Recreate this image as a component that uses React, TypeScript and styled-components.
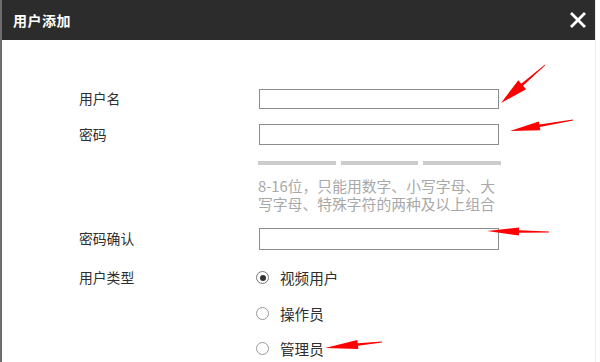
import React from "react";
import styled, { createGlobalStyle } from "styled-components";

const GlobalStyle = createGlobalStyle`
  html, body { margin: 0; padding: 0; background: #ffffff; }
  body { font-family: "Noto Sans CJK SC", "Noto Sans", sans-serif; }
  * { box-sizing: border-box; }
`;

const Dialog = styled.div`
  position: relative;
  width: 596px;
  height: 362px;
  background: #fff;
  border-left: 2px solid #6e6e6e;
  border-right: 1px solid #ececec;
  overflow: hidden;
`;

const Header = styled.div`
  height: 40px;
  background: #2c2c2c;
  display: flex;
  align-items: center;
  justify-content: space-between;
  padding: 0 9px 0 11px;
  color: #fff;
`;

const Title = styled.div`
  font-size: 14px;
  font-weight: 700;
  letter-spacing: 0.5px;
`;

const Close = styled.button`
  border: 0;
  background: transparent;
  padding: 0;
  width: 16px;
  height: 16px;
  display: flex;
  cursor: pointer;
`;

const Form = styled.div`
  padding: 49px 0 0 77px;
  display: flex;
  flex-direction: column;
`;

const Row = styled.div<{ $h: number; $mt?: number }>`
  display: grid;
  grid-template-columns: 180px 1fr;
  align-items: center;
  height: ${(p) => p.$h}px;
  margin-top: ${(p) => p.$mt ?? 0}px;
`;

const Label = styled.div`
  font-size: 13.8px;
  color: #2e2e2e;
  line-height: 1;
`;

const Input = styled.input`
  width: 240px;
  height: 100%;
  border: 1px solid #8c8c8c;
  background: #fff;
  padding: 0 4px;
  outline: none;
`;

const Bars = styled.div`
  display: grid;
  grid-template-columns: 78px 77px 78px;
  column-gap: 5px;
  margin-left: -1px;
`;

const Bar = styled.div`
  height: 4px;
  background: #cccccc;
`;

const Hint = styled.div`
  grid-column: 2;
  width: 246px;
  margin-left: -1px;
  font-size: 14.8px;
  line-height: 18px;
  color: #a8a8a8;
`;

const RadioLine = styled.label`
  display: flex;
  align-items: center;
  gap: 11px;
  font-size: 14.6px;
  color: #2e2e2e;
  margin-left: -3px;
`;

const RadioDot = styled.span<{ $on?: boolean }>`
  width: 13px;
  height: 13px;
  border-radius: 50%;
  border: 1px solid ${(p) => (p.$on ? "#777" : "#9a9a9a")};
  display: flex;
  align-items: center;
  justify-content: center;
  &::after {
    content: "";
    width: 6px;
    height: 6px;
    border-radius: 50%;
    background: ${(p) => (p.$on ? "#333" : "transparent")};
  }
`;

const Annotations = styled.svg`
  position: absolute;
  left: -2px;
  top: 0;
  pointer-events: none;
`;

type Pt = [number, number];

function arrowPoints(tail: Pt, tip: Pt, headLen: number, headW: number, shaftW: number) {
  const dx = tip[0] - tail[0];
  const dy = tip[1] - tail[1];
  const len = Math.hypot(dx, dy);
  const ux = dx / len;
  const uy = dy / len;
  const nx = -uy;
  const ny = ux;
  const bx = tip[0] - ux * headLen;
  const by = tip[1] - uy * headLen;
  const pts: Pt[] = [
    [tail[0] + nx * shaftW * 0.3, tail[1] + ny * shaftW * 0.3],
    [bx + nx * shaftW, by + ny * shaftW],
    [bx + nx * headW, by + ny * headW],
    [tip[0], tip[1]],
    [bx - nx * headW, by - ny * headW],
    [bx - nx * shaftW, by - ny * shaftW],
    [tail[0] - nx * shaftW * 0.3, tail[1] - ny * shaftW * 0.3],
  ];
  return pts.map((p) => `${p[0].toFixed(1)},${p[1].toFixed(1)}`).join(" ");
}

const arrows: { tail: Pt; tip: Pt; hl: number; hw: number }[] = [
  { tail: [545, 65], tip: [501, 103], hl: 28, hw: 6 },
  { tail: [573, 120], tip: [510, 131], hl: 30, hw: 4.5 },
  { tail: [549, 232], tip: [487, 231], hl: 32, hw: 4 },
  { tail: [382, 342], tip: [325, 348], hl: 33, hw: 4.5 },
];

export default function App() {
  return (
    <>
      <GlobalStyle />
      <Dialog>
        <Header>
          <Title>用户添加</Title>
          <Close aria-label="close">
            <svg width="16" height="16" viewBox="0 0 16 16">
              <path d="M2 2 L14 14 M14 2 L2 14" stroke="#fff" strokeWidth="2.8" strokeLinecap="square" />
            </svg>
          </Close>
        </Header>
        <Form>
          <Row $h={20}>
            <Label>用户名</Label>
            <Input />
          </Row>
          <Row $h={21} $mt={15}>
            <Label>密码</Label>
            <Input type="password" />
          </Row>
          <Row $h={4} $mt={16}>
            <span />
            <Bars>
              <Bar />
              <Bar />
              <Bar />
            </Bars>
          </Row>
          <Row $h={36} $mt={12}>
            <span />
            <Hint>8-16位，只能用数字、小写字母、大写字母、特殊字符的两种及以上组合</Hint>
          </Row>
          <Row $h={22} $mt={15}>
            <Label>密码确认</Label>
            <Input type="password" />
          </Row>
          <Row $h={20} $mt={17}>
            <Label>用户类型</Label>
            <RadioLine>
              <RadioDot $on />
              视频用户
            </RadioLine>
          </Row>
          <Row $h={20} $mt={16}>
            <span />
            <RadioLine>
              <RadioDot />
              操作员
            </RadioLine>
          </Row>
          <Row $h={20} $mt={15}>
            <span />
            <RadioLine>
              <RadioDot />
              管理员
            </RadioLine>
          </Row>
        </Form>
        <Annotations width="600" height="362" viewBox="0 0 600 362">
          {arrows.map((a, i) => (
            <polygon key={i} points={arrowPoints(a.tail, a.tip, a.hl, a.hw, 1.3)} fill="#ff0000" />
          ))}
        </Annotations>
      </Dialog>
    </>
  );
}
